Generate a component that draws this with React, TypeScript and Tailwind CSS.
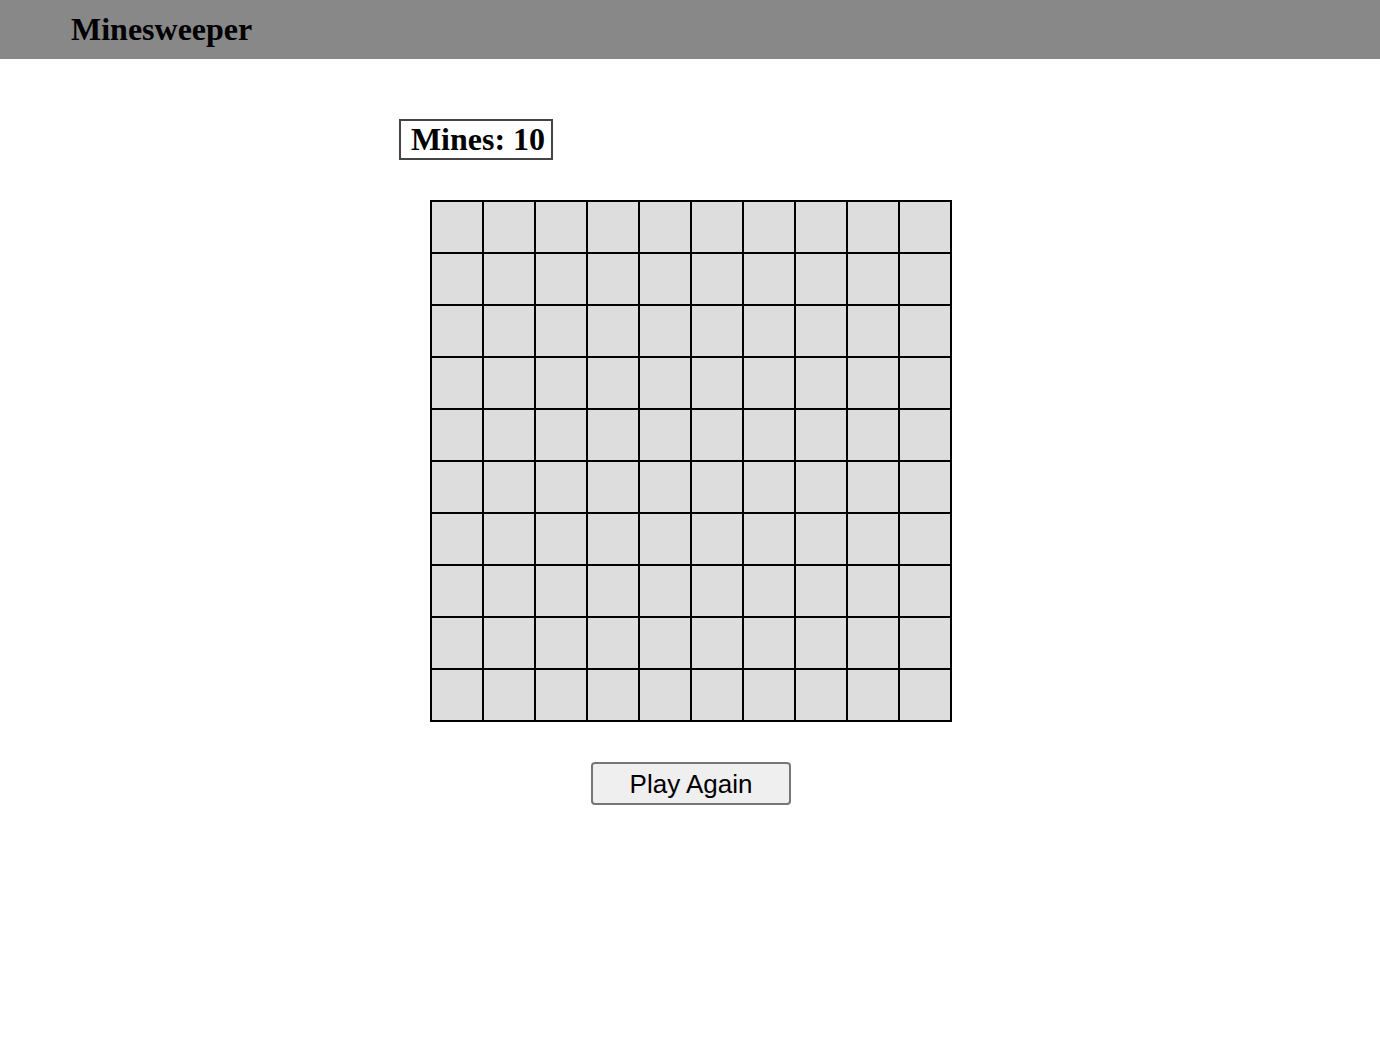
import { useState } from 'react';

const SIZE = 10;

export default function App() {
  const [cells] = useState(() => Array.from({ length: SIZE * SIZE }, (_, i) => i));

  return (
    <div className="min-h-screen bg-white" style={{ fontFamily: '"Liberation Serif", serif' }}>
      {/* Top bar */}
      <header className="h-[59px] bg-[#888888] flex items-center pl-[71px]">
        <h1 className="text-[32px] font-bold text-black leading-none -mt-[2px]">Minesweeper</h1>
      </header>

      <main className="mx-auto w-[582px] pt-[60px]">
        <div className="w-[154px] h-[41px] border-2 border-[#444444] flex items-center justify-center pl-[4px]">
          <span className="text-[32px] font-bold leading-none text-black -mt-[2px]">Mines: 10</span>
        </div>

        {/* Board */}
        <div className="mt-[40px] flex justify-center pl-[2px]">
          <div className="grid grid-cols-10 border border-black">
            {cells.map((i) => (
              <div key={i} className="w-[52px] h-[52px] border border-black bg-[#dddddd]" />
            ))}
          </div>
        </div>

        <div className="mt-[40px] flex justify-center pl-[2px]">
          <button
            type="button"
            className="w-[200px] h-[43px] rounded-[4px] border-2 border-[#767676] bg-[#efefef] text-[26px] leading-none text-black"
            style={{ fontFamily: '"Liberation Sans", Arial, sans-serif' }}
          >
            Play Again
          </button>
        </div>
      </main>
    </div>
  );
}
